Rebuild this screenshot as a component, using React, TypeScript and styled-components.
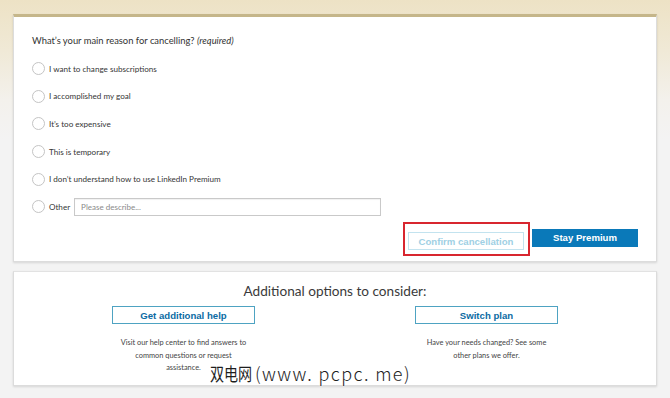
import React from "react";
import styled, { createGlobalStyle } from "styled-components";

const GlobalStyle = createGlobalStyle`
    html, body {
        margin: 0;
        padding: 0;
    }
    body {
        width: 670px;
        height: 398px;
        overflow: hidden;
        font-family: Lato, "Open Sans", sans-serif;
        background: #f3f3f3;
    }
`;

const Page = styled.div`
    position: relative;
    width: 670px;
    height: 398px;
    box-sizing: border-box;
    padding: 14px 13px 0 13px;
    display: flex;
    flex-direction: column;
    gap: 9px;
    background: linear-gradient(
        180deg,
        #ede2c5 0px,
        #f0e9d6 50px,
        #f3f1ec 100px,
        #f3f3f3 140px
    );
`;

const Card = styled.section<{ $gold?: boolean }>`
    background: #fff;
    border: 1px solid #dcdcdc;
    border-top: ${({ $gold }) => ($gold ? "3px solid #c5b68a" : "1px solid #e2e2e2")};
    box-shadow: 0 1px 2px rgba(0, 0, 0, 0.12);
`;

const ReasonCard = styled(Card)`
    height: 248px;
    box-sizing: border-box;
    padding: 17px 18px 0 18px;
    display: flex;
    flex-direction: column;
`;

const Question = styled.p`
    margin: 0;
    font-size: 9.4px;
    line-height: 14px;
    color: #333;

    em {
        font-style: italic;
    }
`;

const Options = styled.div`
    margin-top: 7px;
    display: flex;
    flex-direction: column;
`;

const Option = styled.label`
    height: 27.6px;
    display: flex;
    align-items: center;
    gap: 4px;
    font-size: 8.1px;
    color: #363636;
`;

const Radio = styled.span`
    width: 11px;
    height: 11px;
    border-radius: 50%;
    border: 1px solid #c4c4c4;
    flex-shrink: 0;
`;

const Describe = styled.div`
    margin-left: 0;
    width: 307px;
    height: 18px;
    box-sizing: border-box;
    border: 1px solid #c9c9c9;
    box-shadow: inset 0 1px 1px rgba(0, 0, 0, 0.06);
    padding: 3px 6px;
    font-size: 8px;
    line-height: 10px;
    color: #8a8a8a;
`;

const Actions = styled.div`
    margin-top: 8px;
    display: flex;
    justify-content: flex-end;
    gap: 8px;
`;

const Highlight = styled.div`
    position: relative;

    &::after {
        content: "";
        position: absolute;
        inset: -7px -6px -6px -5px;
        border: 2px solid #d8262f;
        pointer-events: none;
    }
`;

const Button = styled.button<{ $variant: "ghost" | "primary" | "outline"; $width: number }>`
    width: ${({ $width }) => $width}px;
    height: 18px;
    padding: 0;
    box-sizing: border-box;
    font-family: "Liberation Sans", Arial, sans-serif;
    font-weight: 700;
    font-size: 9.6px;
    cursor: pointer;
    background: ${({ $variant }) => ($variant === "primary" ? "#0a79b9" : "#fff")};
    color: ${({ $variant }) =>
        $variant === "primary" ? "#fff" : $variant === "ghost" ? "#9fd0e4" : "#0b6ba3"};
    border: 1px solid
        ${({ $variant }) =>
            $variant === "primary" ? "#0a79b9" : $variant === "ghost" ? "#c3e3ef" : "#4ea3c2"};
`;

const OptionsCard = styled(Card)`
    height: 115px;
    box-sizing: border-box;
    padding-top: 10px;
    display: flex;
    flex-direction: column;
    align-items: center;
`;

const Title = styled.h2`
    margin: 0;
    font-size: 13.6px;
    font-weight: 400;
    line-height: 18px;
    color: #3a3a3a;
`;

const Choices = styled.div`
    margin-top: 6px;
    display: grid;
    grid-template-columns: 160px 160px;
    column-gap: 143px;
`;

const Choice = styled.div`
    display: flex;
    flex-direction: column;
    align-items: center;
    gap: 13px;
`;

const Blurb = styled.p`
    margin: 0;
    text-align: center;
    font-size: 7.4px;
    line-height: 12.5px;
    color: #444;
`;

const Watermark = styled.div`
    position: absolute;
    left: 210px;
    top: 361px;
    font-family: "Noto Sans CJK SC", "DejaVu Sans", sans-serif;
    font-size: 18px;
    font-weight: 300;
    line-height: 24px;
    letter-spacing: 1.4px;
    color: #1e1e1e;
    white-space: nowrap;
    text-shadow: 0 0 2px #fff, 0 0 2px #fff;

    span {
        display: inline-block;
        width: 45px;
        letter-spacing: 0;
        font-weight: 400;
        transform: scaleX(0.78);
        transform-origin: left center;
    }
`;

const reasons = [
    "I want to change subscriptions",
    "I accomplished my goal",
    "It\u2019s too expensive",
    "This is temporary",
    "I don\u2019t understand how to use LinkedIn Premium",
];

const App = () => {
    return (
        <>
            <GlobalStyle />
            <Page>
                <ReasonCard $gold>
                    <Question>
                        What’s your main reason for cancelling? <em>(required)</em>
                    </Question>
                    <Options>
                        {reasons.map((r) => (
                            <Option key={r}>
                                <Radio />
                                {r}
                            </Option>
                        ))}
                        <Option>
                            <Radio />
                            Other
                            <Describe>Please describe...</Describe>
                        </Option>
                    </Options>
                    <Actions>
                        <Highlight>
                            <Button $variant="ghost" $width={116}>
                                Confirm cancellation
                            </Button>
                        </Highlight>
                        <Button $variant="primary" $width={106}>
                            Stay Premium
                        </Button>
                    </Actions>
                </ReasonCard>
                <OptionsCard>
                    <Title>Additional options to consider:</Title>
                    <Choices>
                        <Choice>
                            <Button $variant="outline" $width={143}>
                                Get additional help
                            </Button>
                            <Blurb>
                                Visit our help center to find answers to
                                <br />
                                common questions or request
                                <br />
                                assistance.
                            </Blurb>
                        </Choice>
                        <Choice>
                            <Button $variant="outline" $width={143}>
                                Switch plan
                            </Button>
                            <Blurb>
                                Have your needs changed? See some
                                <br />
                                other plans we offer.
                            </Blurb>
                        </Choice>
                    </Choices>
                </OptionsCard>
                <Watermark>
                    <span>双电网</span>(www. pcpc. me)
                </Watermark>
            </Page>
        </>
    );
};

export default App;
